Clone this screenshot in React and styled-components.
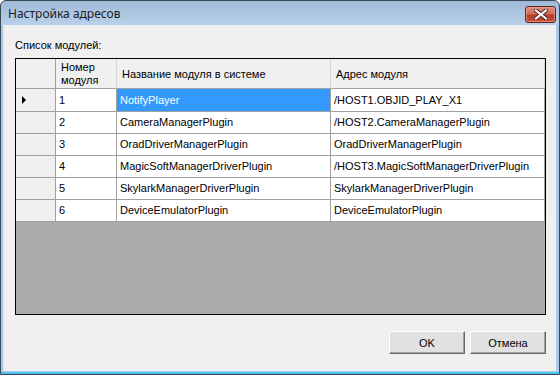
import React from "react";
import styled, { createGlobalStyle } from "styled-components";

const Global = createGlobalStyle`
  html, body { margin: 0; padding: 0; background: #ffffff; }
  body { font-family: "Liberation Sans", Arial, sans-serif; }
`;

const Window = styled.div`
  box-sizing: border-box;
  width: 560px;
  height: 375px;
  border: 1px solid #3a4654;
  border-radius: 6px 6px 0 0;
  background: linear-gradient(#9fbad7, #b9d1ea 24px, #a9cbe9 24px, #a9cbe9 100%);
  display: flex;
  flex-direction: column;
  overflow: hidden;
  box-shadow: inset 0 -2px 0 #4cc3ee;
`;

const TitleBar = styled.div`
  height: 24px;
  display: flex;
  align-items: center;
  justify-content: space-between;
  padding: 0 4px 0 7px;
  flex-shrink: 0;
`;

const Title = styled.div`
  font-family: "Noto Sans", "Open Sans", sans-serif;
  font-size: 12px;
  color: #1b1b1b;
  padding-top: 1px;
`;

const CloseButton = styled.div`
  width: 31px;
  height: 17px;
  box-sizing: border-box;
  border: 1px solid #5e2422;
  border-radius: 3px;
  background: linear-gradient(#dc8f80, #cf6e5c 45%, #b63a26 55%, #c9523c);
  display: flex;
  align-items: center;
  justify-content: center;
  margin-top: 2px;
  margin-right: -1px;
  box-shadow: inset 0 0 0 1px rgba(240, 170, 150, 0.6);
`;

const Client = styled.div`
  flex: 1;
  margin: 0 3px 3px 2px;
  background: #f0f0f0;
  border-left: 1px solid #dde6ef;
  display: flex;
  flex-direction: column;
  padding: 14px 8px 0 11px;
`;

const Label = styled.div`
  font-size: 11px;
  color: #000;
  line-height: 13px;
  height: 19px;
`;

const Grid = styled.div`
  box-sizing: border-box;
  width: 531px;
  height: 257px;
  border: 1px solid #000;
  background: #ababab;
  display: flex;
  flex-direction: column;
`;

const Row = styled.div`
  display: flex;
  height: ${(p) => p.$h}px;
  flex-shrink: 0;
`;

const Cell = styled.div`
  box-sizing: border-box;
  width: ${(p) => p.$w}px;
  flex-shrink: 0;
  border-right: 1px solid #a0a0a0;
  border-bottom: 1px solid #a0a0a0;
  background: ${(p) => (p.$sel ? "#3399ff" : "#ffffff")};
  color: ${(p) => (p.$sel ? "#ffffff" : "#000000")};
  font-size: 11px;
  line-height: 13px;
  padding: 0 3px;
  display: flex;
  align-items: center;
  white-space: nowrap;
  overflow: hidden;
`;

const HeaderCell = styled(Cell)`
  background: #f0f0f0;
  color: #000;
  padding: 1px 5px 0;
  border-right: 1px solid #d6d6d6;
  line-height: 13px;
`;

const RowHeader = styled.div`
  box-sizing: border-box;
  width: 40px;
  flex-shrink: 0;
  background: #f0f0f0;
  border-right: 1px solid #a0a0a0;
  border-bottom: 1px solid #a0a0a0;
  display: flex;
  align-items: center;
  padding-left: 6px;
`;

const Arrow = styled.div`
  width: 0;
  height: 0;
  border-top: 4px solid transparent;
  border-bottom: 4px solid transparent;
  border-left: 4px solid #000;
`;

const Footer = styled.div`
  display: flex;
  justify-content: flex-end;
  gap: 5px;
  padding: 16px 0 0 0;
  width: 531px;
`;

const Button = styled.div`
  box-sizing: border-box;
  width: ${(p) => p.$w}px;
  height: 23px;
  background: #e1e1e1;
  border-top: 1px solid #ffffff;
  border-left: 1px solid #ffffff;
  border-right: 1px solid #696969;
  border-bottom: 1px solid #696969;
  box-shadow: inset -1px -1px 0 #a0a0a0;
  display: flex;
  align-items: center;
  justify-content: center;
  font-size: 11px;
  color: #000;
`;

const cols = [61, 214, 214];
const rows = [
  ["1", "NotifyPlayer", "/HOST1.OBJID_PLAY_X1"],
  ["2", "CameraManagerPlugin", "/HOST2.CameraManagerPlugin"],
  ["3", "OradDriverManagerPlugin", "OradDriverManagerPlugin"],
  ["4", "MagicSoftManagerDriverPlugin", "/HOST3.MagicSoftManagerDriverPlugin"],
  ["5", "SkylarkManagerDriverPlugin", "SkylarkManagerDriverPlugin"],
  ["6", "DeviceEmulatorPlugin", "DeviceEmulatorPlugin"],
];

export default function App() {
  return (
    <>
      <Global />
      <Window>
        <TitleBar>
          <Title>Настройка адресов</Title>
          <CloseButton>
            <svg width="14" height="11" viewBox="0 0 14 11">
              <path
                d="M2 1.5 L12 9.5 M12 1.5 L2 9.5"
                stroke="#4a1a1a"
                strokeWidth="4"
                strokeLinecap="square"
              />
              <path
                d="M2 1.5 L12 9.5 M12 1.5 L2 9.5"
                stroke="#ffffff"
                strokeWidth="2.2"
                strokeLinecap="square"
              />
            </svg>
          </CloseButton>
        </TitleBar>
        <Client>
          <Label>Список модулей:</Label>
          <Grid>
            <Row $h={30}>
              <RowHeader />
              <HeaderCell $w={cols[0]}>
                Номер
                <br />
                модуля
              </HeaderCell>
              <HeaderCell $w={cols[1]}>Название модуля в системе</HeaderCell>
              <HeaderCell $w={cols[2]}>Адрес модуля</HeaderCell>
            </Row>
            {rows.map((r, i) => (
              <Row key={i} $h={i === 0 ? 23 : 22}>
                <RowHeader>{i === 0 && <Arrow />}</RowHeader>
                <Cell $w={cols[0]}>{r[0]}</Cell>
                <Cell $w={cols[1]} $sel={i === 0}>
                  {r[1]}
                </Cell>
                <Cell $w={cols[2]}>{r[2]}</Cell>
              </Row>
            ))}
          </Grid>
          <Footer>
            <Button $w={76}>OK</Button>
            <Button $w={76}>Отмена</Button>
          </Footer>
        </Client>
      </Window>
    </>
  );
}
